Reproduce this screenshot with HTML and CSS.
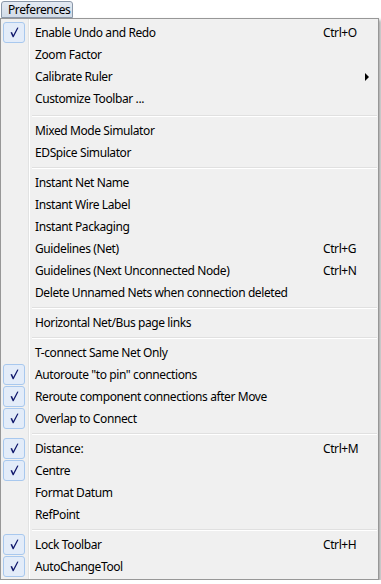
FILE: index.html
```html
<!DOCTYPE html>
<html lang="en">
<head>
    <meta charset="UTF-8">
    <title>Preferences</title>
    <link rel="stylesheet" href="styles.css">
</head>
<body>
    <div class="menubar">
        <span class="menu-title">Preferences</span>
    </div>

    <div class="menu">
        <div class="item checked"><span class="check"></span><span class="label">Enable Undo and Redo</span><span class="key">Ctrl+O</span></div>
        <div class="item"><span class="check"></span><span class="label">Zoom Factor</span></div>
        <div class="item"><span class="check"></span><span class="label">Calibrate Ruler</span><span class="key"></span><span class="arrow"></span></div>
        <div class="item"><span class="check"></span><span class="label">Customize Toolbar ...</span></div>
        <div class="sep first"></div>
        <div class="item"><span class="check"></span><span class="label">Mixed Mode Simulator</span></div>
        <div class="item"><span class="check"></span><span class="label">EDSpice Simulator</span></div>
        <div class="sep"></div>
        <div class="item"><span class="check"></span><span class="label">Instant Net Name</span></div>
        <div class="item"><span class="check"></span><span class="label">Instant Wire Label</span></div>
        <div class="item"><span class="check"></span><span class="label">Instant Packaging</span></div>
        <div class="item"><span class="check"></span><span class="label">Guidelines (Net)</span><span class="key">Ctrl+G</span></div>
        <div class="item"><span class="check"></span><span class="label">Guidelines (Next Unconnected Node)</span><span class="key">Ctrl+N</span></div>
        <div class="item"><span class="check"></span><span class="label">Delete Unnamed Nets when connection deleted</span></div>
        <div class="sep"></div>
        <div class="item"><span class="check"></span><span class="label">Horizontal Net/Bus page links</span></div>
        <div class="sep"></div>
        <div class="item"><span class="check"></span><span class="label">T-connect Same Net Only</span></div>
        <div class="item checked"><span class="check"></span><span class="label">Autoroute "to pin" connections</span></div>
        <div class="item checked"><span class="check"></span><span class="label">Reroute component connections after Move</span></div>
        <div class="item checked"><span class="check"></span><span class="label">Overlap to Connect</span></div>
        <div class="sep"></div>
        <div class="item checked"><span class="check"></span><span class="label">Distance:</span><span class="key">Ctrl+M</span></div>
        <div class="item checked"><span class="check"></span><span class="label">Centre</span></div>
        <div class="item"><span class="check"></span><span class="label">Format Datum</span></div>
        <div class="item"><span class="check"></span><span class="label">RefPoint</span></div>
        <div class="sep"></div>
        <div class="item checked"><span class="check"></span><span class="label">Lock Toolbar</span><span class="key">Ctrl+H</span></div>
        <div class="item checked"><span class="check"></span><span class="label">AutoChangeTool</span></div>
    </div>
</body>
</html>
```

FILE: styles.css
```css
body {
    margin: 0;
    padding: 0;
    background: #fff;
    font-family: "Noto Sans", "Open Sans", sans-serif;
    font-size: 12px;
    letter-spacing: -0.4px;
    color: #000;
}
.menubar {
    height: 18px;
    padding: 1px 0 0 1px;
    box-sizing: border-box;
}
.menu-title {
    display: inline-block;
    width: 72px;
    height: 17px;
    box-sizing: border-box;
    padding-left: 6px;
    line-height: 15px;
    border: 1px solid #8b98a9;
    border-radius: 3px 3px 0 0;
    background: linear-gradient(#e4eaf2, #d2dce8);
}
.menu {
    width: 379px;
    box-sizing: border-box;
    border: 1px solid #979797;
    background: #f0f0f0;
    padding: 3px 0 1px 0;
    box-shadow: 2px 2px 3px rgba(0, 0, 0, 0.35);
    background-image: linear-gradient(to right, transparent 27px, #e2e3e3 27px, #e2e3e3 28px, #fff 28px, #fff 29px, transparent 29px);
}
.item {
    display: grid;
    grid-template-columns: 34px 288px 38px 17px;
    height: 22px;
    line-height: 22px;
    white-space: nowrap;
}
.check {
    display: block;
}
.checked .check {
    width: 22px;
    height: 21px;
    margin: 0 0 0 2px;
    box-sizing: border-box;
    border: 1px solid #a8c8ee;
    border-radius: 3px;
    background-color: #e3ecf9;
    background-image: url("data:image/svg+xml,%3Csvg xmlns='http://www.w3.org/2000/svg' width='20' height='19'%3E%3Cpath d='M6.5 9.5 L8 9 L9.3 12 L13.3 4.5 L14.5 4.8 L9.6 14.2 L8.7 14.2 Z' fill='%23141b6e'/%3E%3C/svg%3E");
    background-repeat: no-repeat;
}
.arrow {
    display: block;
    width: 0;
    height: 0;
    margin: 7px 0 0 4px;
    border-left: 4px solid #000;
    border-top: 4px solid transparent;
    border-bottom: 4px solid transparent;
}
.sep {
    height: 8px;
    margin-left: 31px;
    margin-right: 1px;
    background: linear-gradient(transparent 3px, #e0e0e0 3px, #e0e0e0 4px, #fff 4px, #fff 5px, transparent 5px);
}
.sep.first {
    height: 10px;
    background: linear-gradient(transparent 5px, #e0e0e0 5px, #e0e0e0 6px, #fff 6px, #fff 7px, transparent 7px);
}
```
